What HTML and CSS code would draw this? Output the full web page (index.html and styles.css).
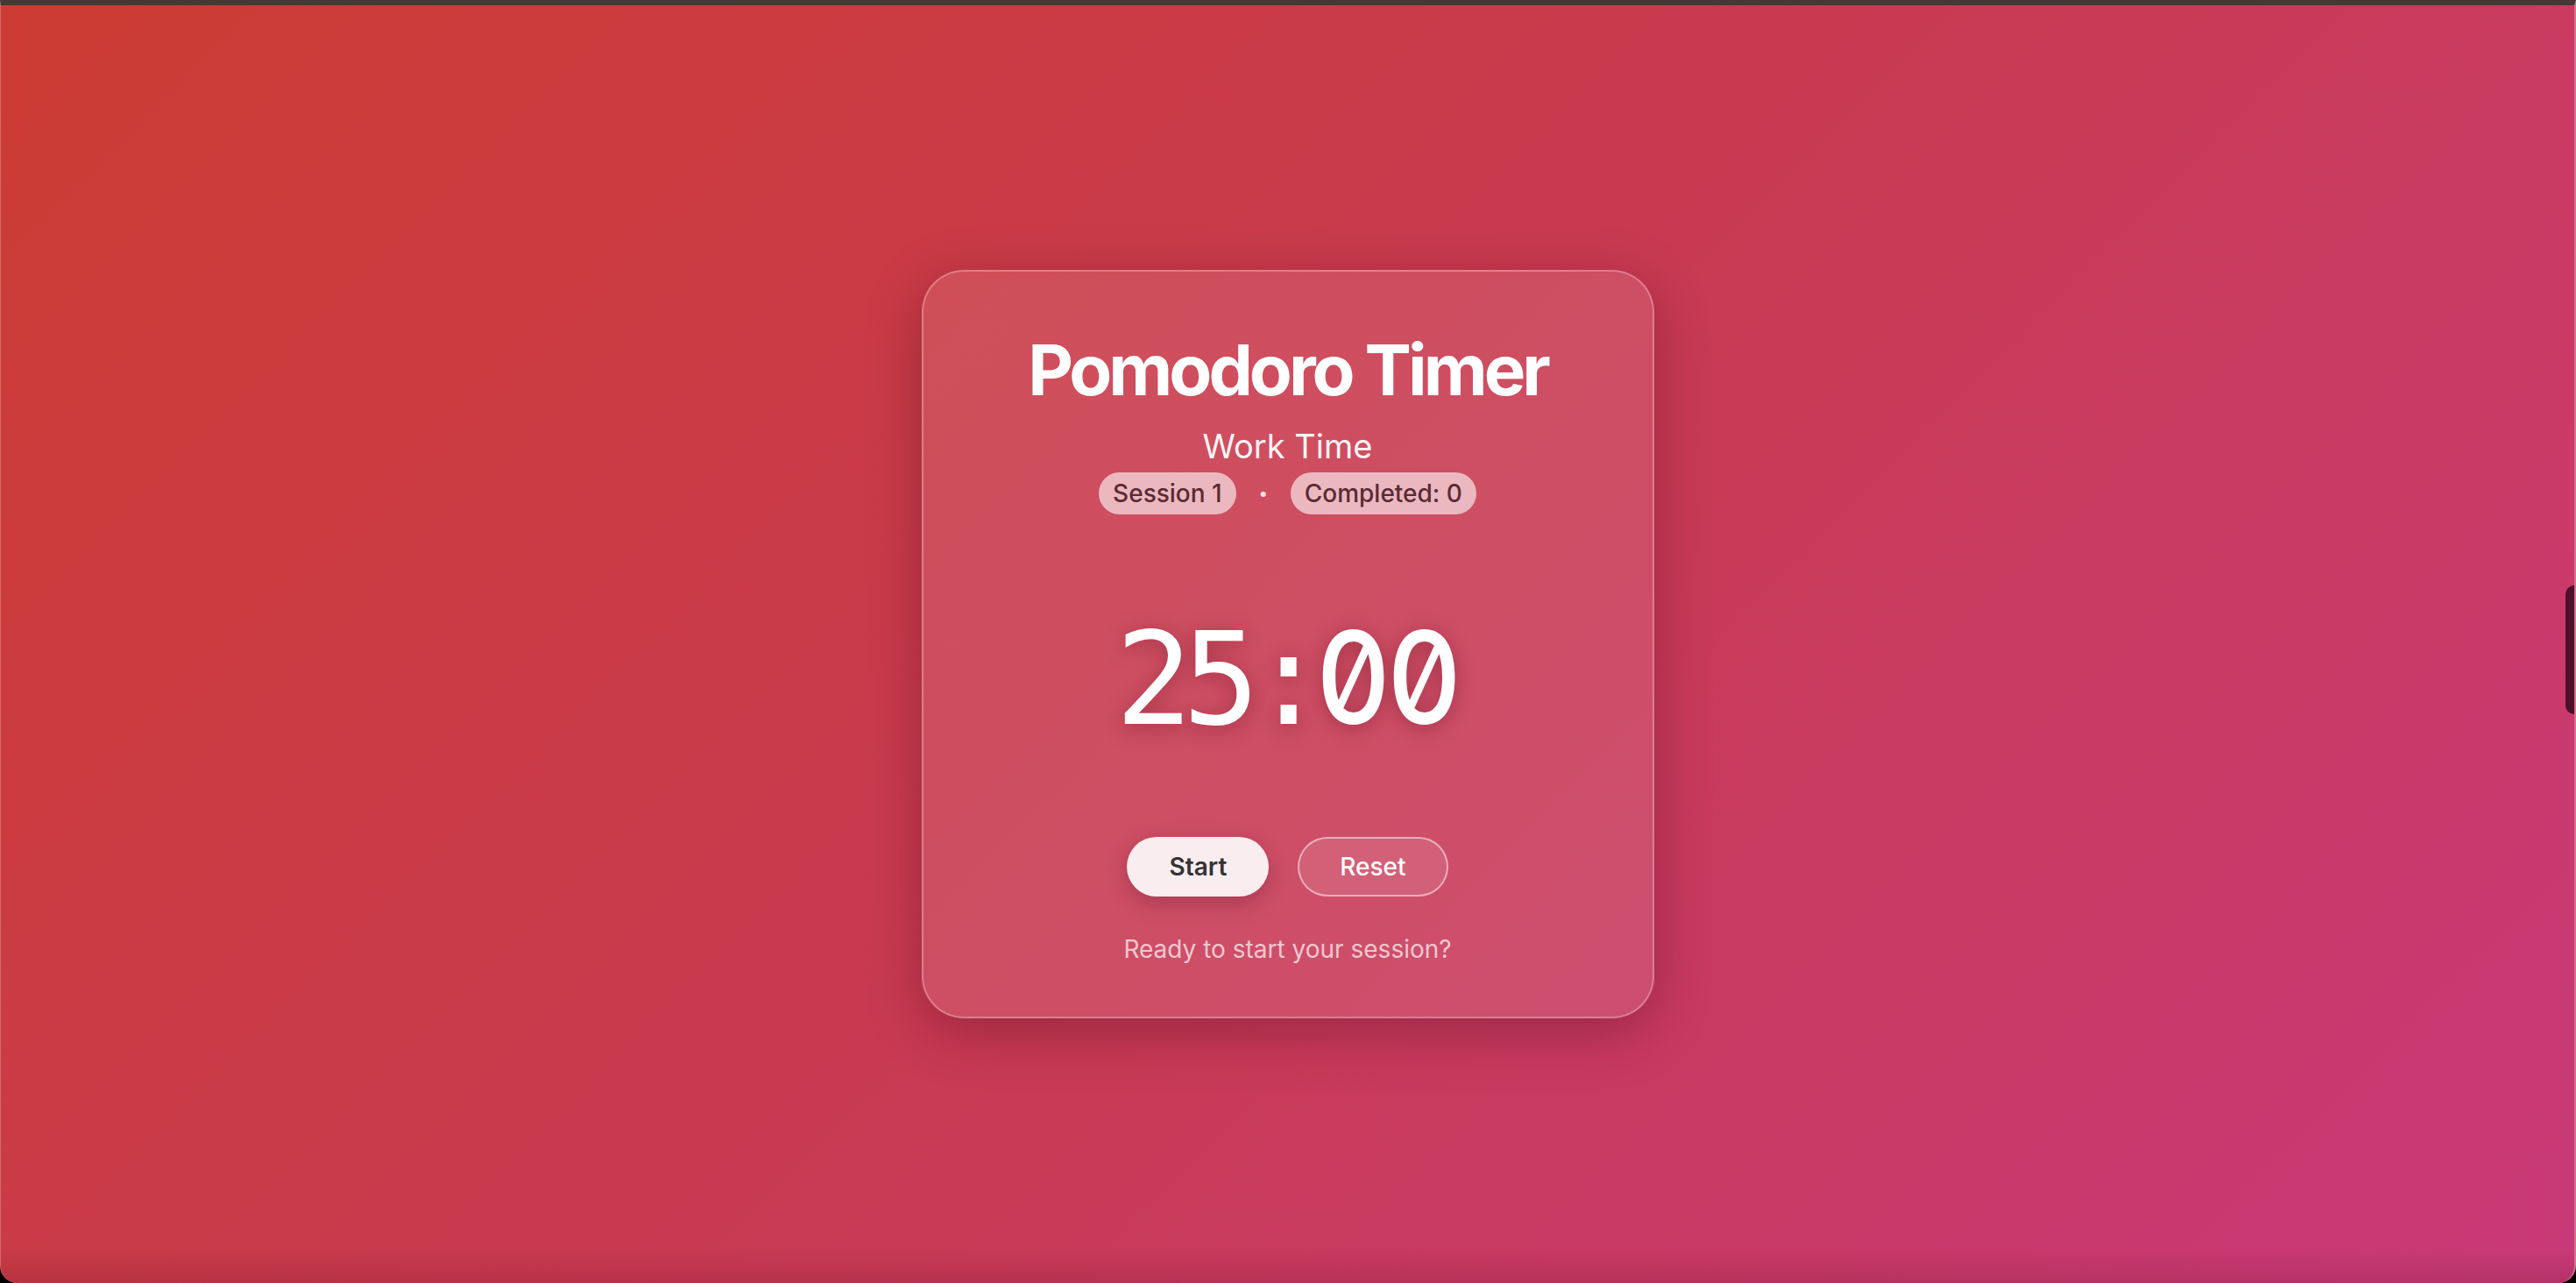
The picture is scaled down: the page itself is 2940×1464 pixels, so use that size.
FILE: index.html
```html
<!DOCTYPE html>
<html lang="en">
<head>
<meta charset="utf-8">
<title>Pomodoro Timer</title>
<link rel="stylesheet" href="styles.css">
</head>
<body>
<div class="window">
  <main class="stage">
    <section class="card">
      <h1 class="title">Pomodoro Timer</h1>
      <p class="mode">Work Time</p>
      <div class="meta">
        <span class="pill">Session 1</span>
        <span class="dot">·</span>
        <span class="pill">Completed: 0</span>
      </div>
      <div class="timer">25:<span class="zero">0</span><span class="zero">0</span></div>
      <div class="controls">
        <button class="btn btn-primary">Start</button>
        <button class="btn btn-secondary">Reset</button>
      </div>
      <p class="status">Ready to start your session?</p>
    </section>
  </main>
  <div class="edge-tab"></div>
</div>
</body>
</html>
```
FILE: styles.css
```css
html, body {
  margin: 0;
  padding: 0;
  height: 100%;
  background: #000;
}

body {
  font-family: Inter, "Noto Sans", "Liberation Sans", sans-serif;
}

.window {
  position: relative;
  box-sizing: border-box;
  height: 1464px;
  border-top: 6px solid #4b3535;
  border-left: 1px solid #d56a66;
  border-right: 2px solid #d8708f;
  border-radius: 0 0 20px 20px;
  overflow: hidden;
  background:
    linear-gradient(to top, rgba(70, 0, 20, 0.14), rgba(70, 0, 20, 0) 40px),
    linear-gradient(135deg, #cc3c33 0%, #c93a52 50%, #c83a78 100%);
}

.stage {
  height: 100%;
  display: flex;
  align-items: center;
  justify-content: center;
}

.card {
  box-sizing: border-box;
  width: 836px;
  padding: 64px 64px 60px;
  border: 2px solid rgba(255, 255, 255, 0.28);
  border-radius: 48px;
  background: rgba(255, 255, 255, 0.1);
  box-shadow: 0 16px 64px rgba(60, 0, 20, 0.32);
  text-align: center;
  color: #fff;
}

.title {
  margin: 0 0 16px;
  font-size: 80px;
  line-height: 96px;
  font-weight: 700;
  letter-spacing: -4px;
}

.mode {
  margin: 0 0 7px;
  font-size: 38px;
  line-height: 46px;
  font-weight: 400;
  color: rgba(255, 255, 255, 0.96);
}

.meta {
  display: flex;
  justify-content: center;
  align-items: center;
}

.pill {
  padding: 6px 16px;
  font-size: 28px;
  line-height: 36px;
  font-weight: 500;
  color: #5a2b36;
  background: rgba(255, 255, 255, 0.6);
  border-radius: 999px;
}

.dot {
  margin: 0 25px;
  font-size: 36px;
  line-height: 36px;
  font-weight: 700;
  color: rgba(255, 255, 255, 0.85);
}

.timer {
  margin: 113px 0 107px;
  font-family: "DejaVu Sans Mono", monospace;
  font-size: 146px;
  line-height: 146px;
  font-weight: 400;
  letter-spacing: -11px;
  color: #fff;
  text-shadow: 0 4px 24px rgba(80, 0, 20, 0.35);
  white-space: nowrap;
}

.zero {
  display: inline-block;
  margin: 0 -7px;
  font-family: Inter, sans-serif;
  font-feature-settings: "zero" 1, "tnum" 1;
  font-size: 147px;
  line-height: 146px;
  font-weight: 500;
  letter-spacing: 0;
  transform: scaleX(0.9);
}

.controls {
  display: flex;
  justify-content: center;
  gap: 33px;
  margin-bottom: 43px;
}

.btn {
  font-family: Inter, "Noto Sans", sans-serif;
  font-size: 28px;
  line-height: 34px;
  padding: 15px 46px;
  border-radius: 999px;
  border: 2px solid transparent;
  cursor: pointer;
}

.btn-primary {
  background: rgba(255, 255, 255, 0.9);
  color: #333;
  font-weight: 600;
  box-shadow: 0 8px 24px rgba(60, 0, 20, 0.25);
}

.btn-secondary {
  background: rgba(255, 255, 255, 0.1);
  border-color: rgba(255, 255, 255, 0.5);
  color: #fff;
  font-weight: 500;
}

.status {
  margin: 0;
  font-size: 28px;
  line-height: 34px;
  color: rgba(255, 255, 255, 0.7);
}

.edge-tab {
  position: absolute;
  right: 0;
  top: 662px;
  width: 10px;
  height: 147px;
  background: #4e0f2a;
  border-radius: 14px 0 0 14px;
}
```
